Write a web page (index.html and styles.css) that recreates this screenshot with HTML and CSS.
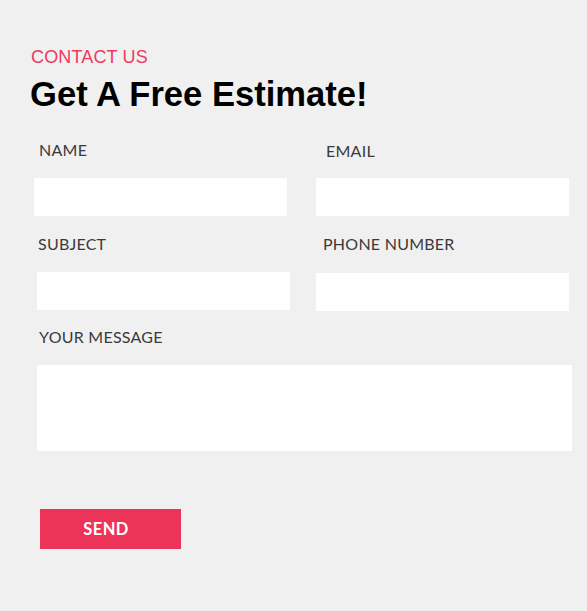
FILE: index.html
```html
<!DOCTYPE html>
<html lang="en">
<head>
<meta charset="utf-8">
<title>Contact Us</title>
<link rel="stylesheet" href="styles.css">
</head>
<body>
<section class="contact">
  <p class="eyebrow">CONTACT US</p>
  <h1 class="title">Get A Free Estimate!</h1>
  <form class="form">
    <div class="field">
      <label class="label label-name">NAME</label>
      <input class="input" type="text">
    </div>
    <div class="field field-right">
      <label class="label label-email">EMAIL</label>
      <input class="input" type="email">
    </div>
    <div class="field field-subject">
      <label class="label label-subject">SUBJECT</label>
      <input class="input" type="text">
    </div>
    <div class="field field-right">
      <label class="label label-phone">PHONE NUMBER</label>
      <input class="input input-phone" type="tel">
    </div>
    <div class="field field-message">
      <label class="label label-message">YOUR MESSAGE</label>
      <textarea class="input textarea"></textarea>
    </div>
    <div class="actions">
      <button class="send" type="button">SEND</button>
    </div>
  </form>
</section>
</body>
</html>
```

FILE: styles.css
```css
html, body {
  margin: 0;
  padding: 0;
  background: #f0f0f0;
}

.contact {
  padding: 47px 0 0 0;
}

.eyebrow {
  margin: 0 0 7px 31px;
  font-family: "Liberation Sans", Arial, sans-serif;
  font-size: 18px;
  line-height: 20px;
  letter-spacing: 0.15px;
  color: #ee3a5f;
}

.title {
  margin: 0 0 27px 30px;
  font-family: "Liberation Sans", Arial, sans-serif;
  font-weight: bold;
  font-size: 34.6px;
  line-height: 40px;
  color: #000;
}

.form {
  display: grid;
  grid-template-columns: 253px 253px;
  column-gap: 29px;
  row-gap: 19px;
  padding-left: 34px;
}

.field {
  display: flex;
  flex-direction: column;
}

.field-subject {
  margin-left: 3px;
}

.field-message {
  grid-column: 1 / 3;
  margin-left: 3px;
  margin-top: -2px;
}

.label {
  font-family: Lato, "Open Sans", sans-serif;
  font-size: 16px;
  line-height: 18px;
  letter-spacing: 0.25px;
  color: #3a3a3a;
  margin-bottom: 19px;
}

.label-name { padding-left: 5px; }
.label-email { padding-left: 10px; padding-top: 1px; margin-bottom: 18px; }
.label-subject { padding-left: 1px; }
.label-phone { padding-left: 7px; }
.label-message { padding-left: 2px; }

.input {
  display: block;
  box-sizing: border-box;
  width: 253px;
  height: 38px;
  margin: 0;
  padding: 0 10px;
  border: none;
  outline: none;
  background: #fff;
  font-family: Lato, sans-serif;
  font-size: 15px;
}

.input-phone {
  margin-top: 1px;
}

.textarea {
  width: 535px;
  height: 86px;
  resize: none;
}

.actions {
  grid-column: 1 / 3;
  margin-top: 39px;
  padding-left: 6px;
}

.send {
  display: block;
  width: 141px;
  height: 40px;
  padding: 0 9px 0 0;
  border: none;
  background: #ec3459;
  color: #fff;
  font-family: Lato, sans-serif;
  font-weight: bold;
  font-size: 16.5px;
  letter-spacing: 0.4px;
  text-align: center;
  cursor: pointer;
}
```
